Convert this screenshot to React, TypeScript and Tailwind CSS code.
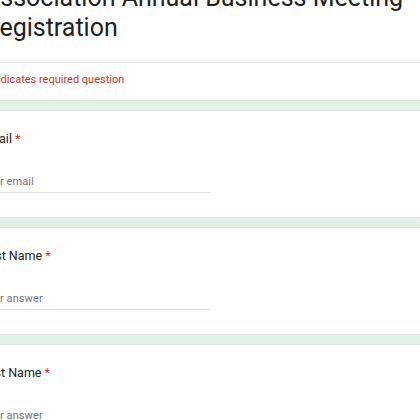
const questions = [
  { label: "Email", placeholder: "Your email" },
  { label: "First Name", placeholder: "Your answer" },
  { label: "Last Name", placeholder: "Your answer" },
];

function Gap() {
  return <div className="h-[11px] shrink-0 bg-[#e4f1e6] border-y border-[#dfe5e0]" />;
}

function QuestionCard({ label, placeholder }: { label: string; placeholder: string }) {
  return (
    <div className="bg-white px-[21px] pt-[18px] pb-[24px]">
      <div className="text-[12.5px] leading-[20px] text-[#202124]">
        {label}
        <span className="pl-[3px] text-[#d93025]">*</span>
      </div>
      <div className="mt-[22px] w-[229px] border-b border-[#e2e3e4] text-[11px] leading-[21px] tracking-[0.1px] text-[#70757a]">
        {placeholder}
      </div>
    </div>
  );
}

export default function App() {
  return (
    <div className="w-[420px] h-[420px] overflow-hidden bg-white font-['Roboto',sans-serif]">
      <div className="flex flex-col -ml-[40px] w-[520px]">
        <div className="bg-white">
          <h1 className="-mt-[17px] ml-[24px] w-[460px] text-[25px] leading-[30px] font-normal text-[#202124]">
            Association Annual Business Meeting Registration
          </h1>
          <div className="mt-[19px] border-t border-[#e3e4e6] px-[21px] pt-[9px] pb-[12px]">
            <p className="ml-[3px] text-[11px] leading-[16px] text-[#d93025]">* Indicates required question</p>
          </div>
        </div>
        {questions.map((q) => (
          <div key={q.label}>
            <Gap />
            <QuestionCard label={q.label} placeholder={q.placeholder} />
          </div>
        ))}
      </div>
    </div>
  );
}
